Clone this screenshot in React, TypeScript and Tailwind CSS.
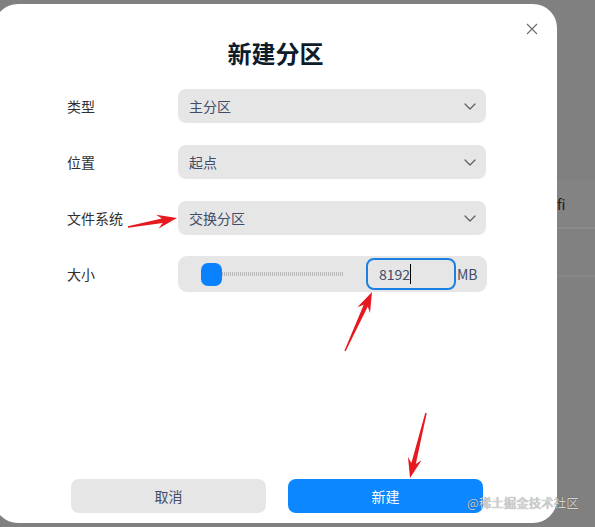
import React from 'react';

const font = "font-['Noto_Sans_CJK_SC','Noto_Sans',sans-serif]";

// thin hand-drawn style arrow, from tail (tx,ty) to tip (px,py)
function arrowPoints(tx: number, ty: number, px: number, py: number) {
  const dx = px - tx;
  const dy = py - ty;
  const len = Math.hypot(dx, dy);
  const ux = dx / len;
  const uy = dy / len;
  const nx = -uy;
  const ny = ux;
  const headLen = 20;
  const headW = 7;
  const pt = (x: number, y: number) => `${x.toFixed(1)},${y.toFixed(1)}`;
  const bx = px - ux * headLen;
  const by = py - uy * headLen;
  const kx = px - ux * (headLen - 5);
  const ky = py - uy * (headLen - 5);
  return [
    pt(tx + nx * 0.7, ty + ny * 0.7),
    pt(kx + nx * 2.3, ky + ny * 2.3),
    pt(bx + nx * headW, by + ny * headW),
    pt(px, py),
    pt(bx - nx * headW, by - ny * headW),
    pt(kx - nx * 2.3, ky - ny * 2.3),
    pt(tx - nx * 0.7, ty - ny * 0.7),
  ].join(' ');
}

function Chevron() {
  return (
    <svg width="12" height="7" viewBox="0 0 12 7" fill="none">
      <path d="M1 1L6 6L11 1" stroke="#5c5c5c" strokeWidth="1.2" strokeLinecap="round" strokeLinejoin="round" />
    </svg>
  );
}

function SelectRow({ label, value, className = '' }: { label: string; value: string; className?: string }) {
  return (
    <div className={`flex items-center ${className}`}>
      <span className="w-[111px] shrink-0 text-[14px] text-[#303030]">{label}</span>
      <div className="flex-1 h-[34px] rounded-[8px] bg-[#e6e6e6] flex items-center justify-between pl-[11px] pr-[10px]">
        <span className="text-[14px] text-[#414d68]">{value}</span>
        <Chevron />
      </div>
    </div>
  );
}

export default function App() {
  return (
    <div className={`relative w-[595px] h-[527px] bg-[#808080] flex overflow-hidden ${font}`}>
      {/* Dialog */}
      <div className="relative ml-[-6px] mt-[4px] w-[563px] h-[519px] shrink-0 bg-white rounded-[24px] flex flex-col">
        <button className="absolute top-[19px] right-[19px] w-[12px] h-[12px] flex items-center justify-center">
          <svg width="12" height="12" viewBox="0 0 12 12" fill="none">
            <path d="M1 1L11 11M11 1L1 11" stroke="#6b6b6b" strokeWidth="1.1" />
          </svg>
        </button>

        <h1 className="mt-[33px] h-[32px] leading-[32px] text-center text-[24px] font-bold text-[#0d1b2a]">新建分区</h1>

        <div className="mt-[20px] pl-[73px] pr-[71px] flex flex-col">
          <SelectRow label="类型" value="主分区" />
          <SelectRow label="位置" value="起点" className="mt-[22px]" />
          <SelectRow label="文件系统" value="交换分区" className="mt-[22px]" />

          <div className="flex items-center mt-[21px]">
            <span className="w-[111px] shrink-0 text-[14px] text-[#303030]">大小</span>
            <div className="flex-1 h-[36px] rounded-[9px] bg-[#e6e6e6] flex items-center pl-[23px] pr-[9px]">
              <div className="w-[21px] h-[23px] rounded-[7px] bg-[#0a82ff] shrink-0" />
              <div className="w-[121px] h-[4px] bg-[repeating-linear-gradient(90deg,#b9b9b9_0_1px,transparent_1px_2px)]" />
              <div className="ml-[23px] w-[90px] h-[32px] rounded-[8px] border-2 border-[#1b7fe3] flex items-center pl-[11px]">
                <span className="text-[14px] text-[#414d68] leading-none">8192</span>
                <span className="w-px h-[20px] bg-black" />
              </div>
              <span className="ml-[1px] text-[14px] text-[#414d68]">MB</span>
            </div>
          </div>
        </div>

        <div className="mt-auto mb-[10px] pl-[77px] flex gap-[22px]">
          <button className="w-[195px] h-[34px] rounded-[8px] bg-[#e6e6e6] text-[14px] text-[#414d68]">取消</button>
          <button className="w-[195px] h-[34px] rounded-[8px] bg-[#0d87ff] text-[14px] text-white">新建</button>
        </div>
      </div>

      {/* Background window behind the dialog */}
      <div className="flex-1 flex flex-col">
        <div className="h-[180px]" />
        <div className="h-[47px] bg-[#838383] flex items-center">
          <span className="text-[14px] text-[#1a1a1a] leading-none">fi</span>
        </div>
        <div className="h-[2px] bg-[#8b8b8b]" />
        <div className="h-[46px] bg-[#818181]" />
        <div className="h-[2px] bg-[#878787]" />
      </div>

      {/* Annotations */}
      <svg className="absolute inset-0 pointer-events-none" width="595" height="527" viewBox="0 0 595 527">
        <polygon points={arrowPoints(128, 227, 177, 218)} fill="#e5191f" />
        <polygon points={arrowPoints(345, 351, 372, 292)} fill="#e5191f" />
        <polygon points={arrowPoints(426, 413, 410, 478)} fill="#e5191f" />
      </svg>

      <span className="absolute left-[467px] top-[494px] text-[12.5px] text-[#d4d4d4] [text-shadow:0_0_1px_rgba(0,0,0,0.55)]">
        @稀土掘金技术社区
      </span>
    </div>
  );
}
